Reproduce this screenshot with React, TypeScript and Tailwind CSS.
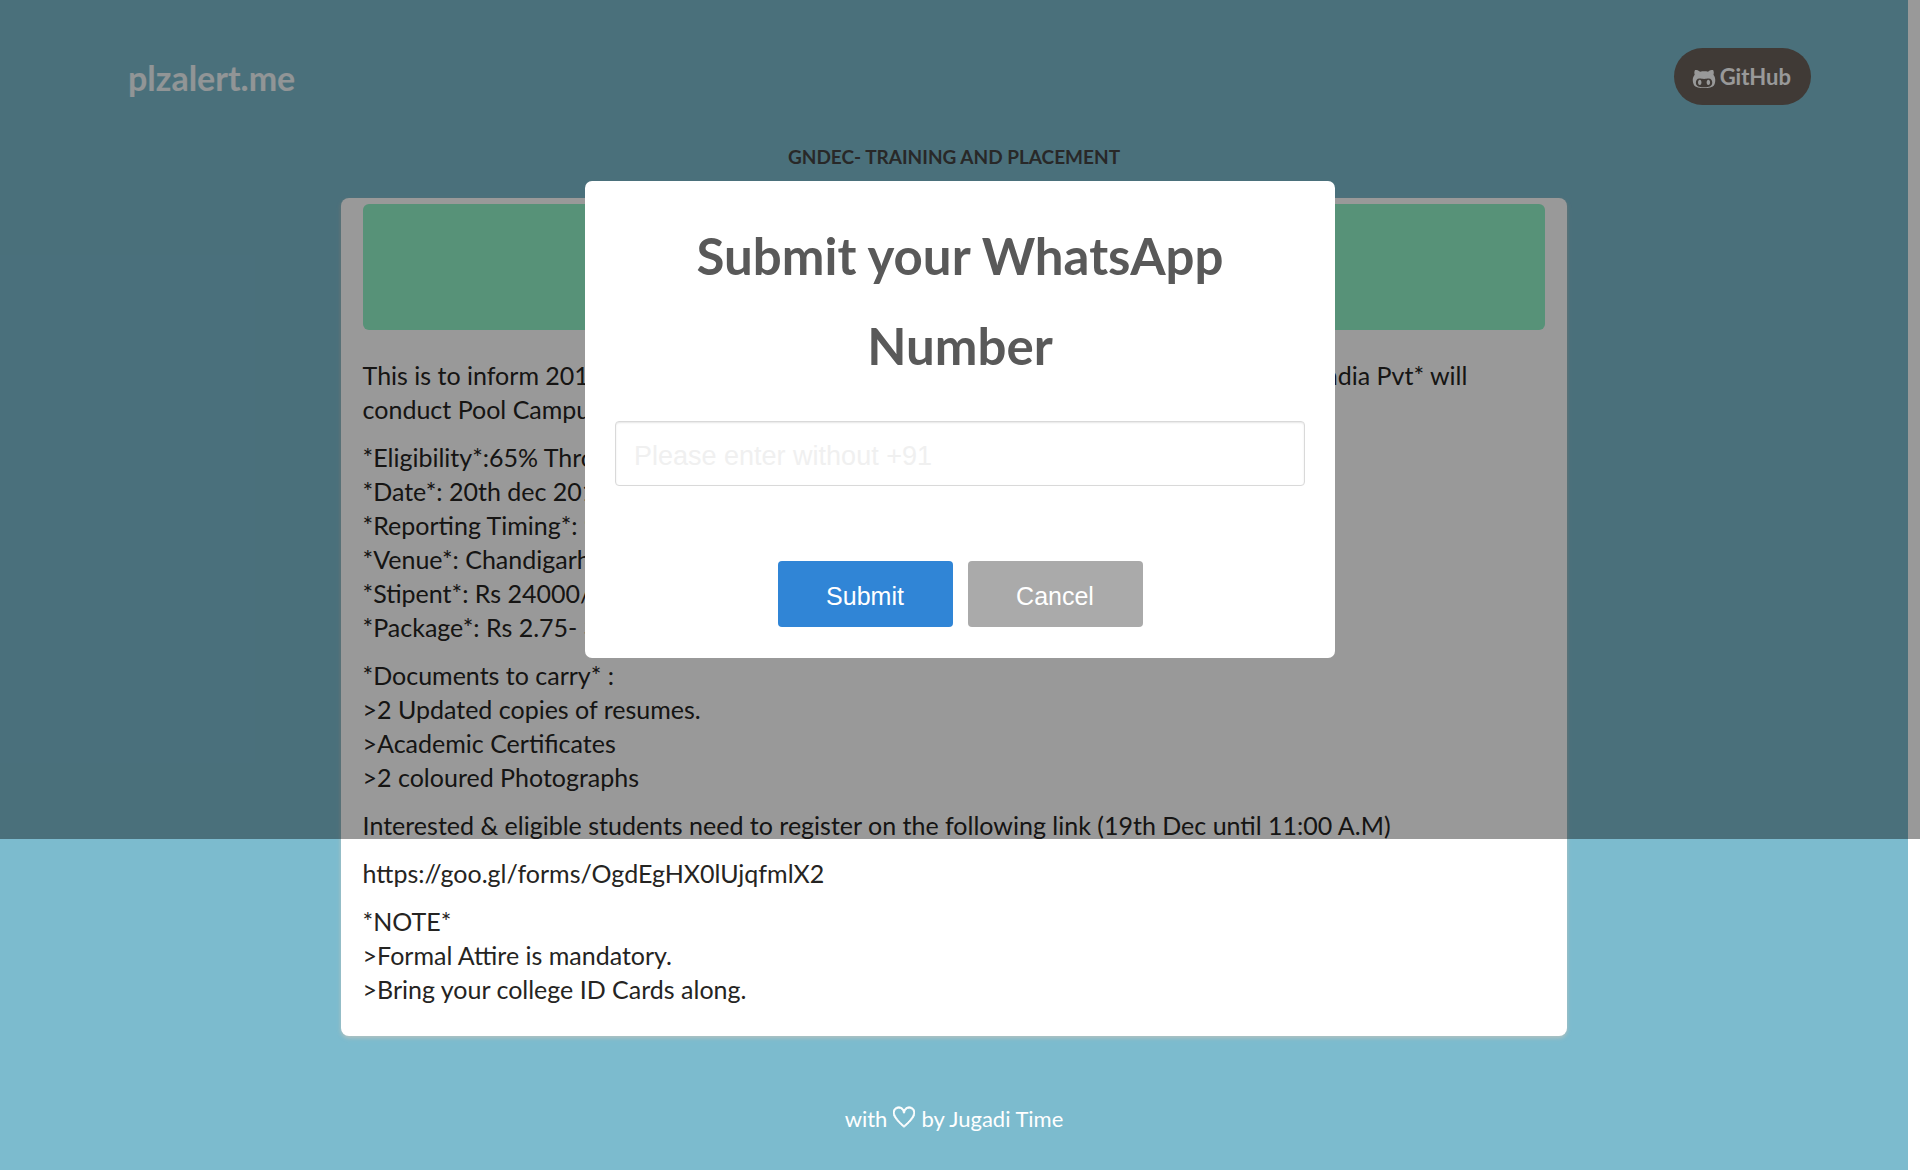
import { FaGithubAlt } from "react-icons/fa";
import { TfiHeart } from "react-icons/tfi";

const paragraphs: string[][] = [
  [
    "*Eligibility*:65% Throughout",
    "*Date*: 20th dec 2017",
    "*Reporting Timing*: 9:00 A.M",
    "*Venue*: Chandigarh",
    "*Stipent*: Rs 24000/-",
    "*Package*: Rs 2.75- 3 LPA",
  ],
  ["*Documents to carry* :", ">2 Updated copies of resumes.", ">Academic Certificates", ">2 coloured Photographs"],
  ["Interested & eligible students need to register on the following link (19th Dec until 11:00 A.M)"],
  ["https://goo.gl/forms/OgdEgHX0lUjqfmlX2"],
  ["*NOTE*", ">Formal Attire is mandatory.", ">Bring your college ID Cards along."],
];

function Header() {
  return (
    <header className="flex items-start justify-between pt-12 pl-32 pr-[97px]">
      <h1 className="pt-2 text-[34px] leading-[44px] font-bold text-white/90">plzalert.me</h1>
      <a
        href="https://github.com"
        className="flex h-[57px] items-center gap-1 rounded-full bg-[#6b615a] pl-[18px] pr-5 text-[22px] font-bold text-white"
      >
        <FaGithubAlt className="mt-1 size-6" />
        GitHub
      </a>
    </header>
  );
}

function Notice() {
  return (
    <article className="mx-auto mt-7 w-[64.3%] rounded-lg bg-white px-[22px] pt-1.5 pb-[30px] text-[25px] leading-[34px] text-[#252422] shadow-[0_2px_4px_rgba(204,197,185,0.7)]">
      <div className="h-[126px] rounded-md bg-[#91f3c8]" />
      <div className="mt-7 flex flex-col gap-3.5">
        <div>
          <p className="flex justify-between pr-[78px]">
            <span>This is to inform 2018</span>
            <span>India Pvt* will</span>
          </p>
          <p>conduct Pool Campus</p>
        </div>
        {paragraphs.map((lines) => (
          <p key={lines[0]}>
            {lines.map((line) => (
              <span key={line} className="block">
                {line}
              </span>
            ))}
          </p>
        ))}
      </div>
    </article>
  );
}

function SubmitDialog() {
  return (
    <div className="absolute inset-x-0 top-0 flex h-[839px] items-start justify-center bg-black/40 pt-[181px]">
      <form
        role="dialog"
        aria-labelledby="dialog-title"
        onSubmit={(e) => e.preventDefault()}
        className="w-[750px] rounded-[7px] bg-white px-[30px] pt-[30px] pb-[31px] text-center"
      >
        <h2 id="dialog-title" className="px-10 text-[51px] leading-[90px] font-bold text-[#595959]">
          Submit your WhatsApp Number
        </h2>
        <input
          type="tel"
          aria-label="WhatsApp number"
          placeholder="Please enter without +91"
          className="mt-[30px] block h-[65px] w-full rounded border border-[#d9d9d9] px-[18px] pt-1.5 font-['Liberation_Sans',sans-serif] text-[27px] shadow-[inset_0_1px_2px_rgba(0,0,0,0.1)] outline-none placeholder:text-[#f0f0f0]"
        />
        <div className="mt-[75px] flex justify-center gap-[15px] font-['Liberation_Sans',sans-serif] text-[25px] text-white">
          <button type="submit" className="h-[66px] w-[175px] rounded bg-[#3085d6] pt-1.5">
            Submit
          </button>
          <button type="button" className="h-[66px] w-[175px] rounded bg-[#aaa] pt-1.5">
            Cancel
          </button>
        </div>
      </form>
    </div>
  );
}

export default function App() {
  return (
    <div className="relative min-h-screen bg-white pr-3 font-['Lato','Open_Sans',sans-serif]">
      <div className="min-h-screen bg-[#7cbbce]">
        <Header />
        <h3 className="mt-[39px] text-center text-[19px] leading-[26px] font-bold text-[#444]">
          GNDEC- TRAINING AND PLACEMENT
        </h3>
        <Notice />
        <footer className="mt-[67px] flex items-center justify-center gap-1.5 pb-8 text-[22px] leading-8 text-white">
          with
          <TfiHeart className="mb-1 size-[22px] stroke-current stroke-[0.7]" aria-label="love" />
          by Jugadi Time
        </footer>
      </div>
      <SubmitDialog />
    </div>
  );
}
